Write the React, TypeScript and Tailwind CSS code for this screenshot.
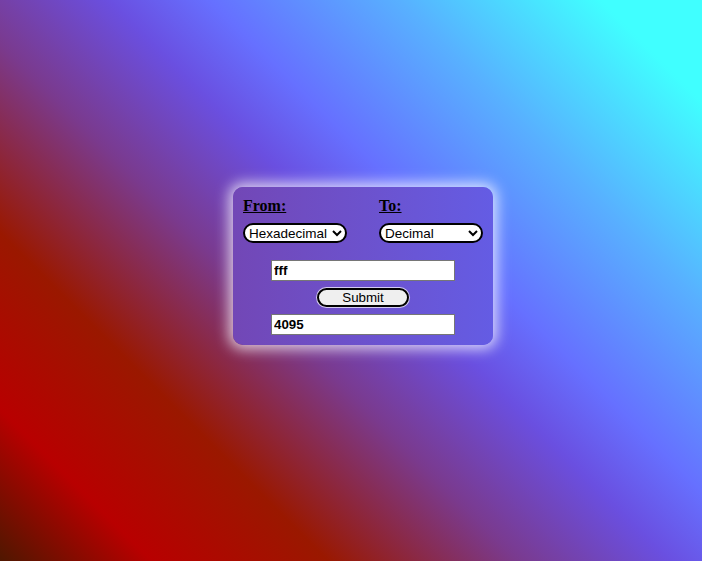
import { useState } from "react";

export default function App() {
  const [from, setFrom] = useState("Hexadecimal");
  const [to, setTo] = useState("Decimal");
  const [value, setValue] = useState("fff");
  const [result, setResult] = useState("4095");

  const bases: Record<string, number> = { Binary: 2, Octal: 8, Decimal: 10, Hexadecimal: 16 };

  const convert = () => {
    const n = parseInt(value, bases[from]);
    setResult(isNaN(n) ? "" : n.toString(bases[to]));
  };

  return (
    <div className="min-h-screen w-full bg-[linear-gradient(45deg,#4f1700_0%,#b80000_12%,#9a1800_26%,#7a3a8e_41%,#6a4fe0_53%,#6670ff_61%,#58b0ff_76%,#40ffff_92%)] pl-[233px] pt-[187px]">
      {/* Card */}
      <div className="w-[260px] rounded-[10px] bg-linear-to-r from-[#7247b6] to-[#645ce4] px-[10px] pt-[10px] pb-[10px] shadow-[0_0_14px_4px_rgba(255,255,255,0.75)]">
        <div className="flex justify-between">
          <div className="w-[104px]">
            <div className="h-[18px] font-['Liberation_Serif',serif] text-[16px] font-bold leading-[18px] underline">From:</div>
            <select
              value={from}
              onChange={(e) => setFrom(e.target.value)}
              className="mt-[8px] h-[20px] w-[104px] rounded-full border-2 border-black bg-white pl-0 font-['Liberation_Sans',Arial,sans-serif] text-[13.5px] text-black"
            >
              {Object.keys(bases).map((b) => (
                <option key={b}>{b}</option>
              ))}
            </select>
          </div>
          <div className="w-[104px]">
            <div className="h-[18px] font-['Liberation_Serif',serif] text-[16px] font-bold leading-[18px] underline">To:</div>
            <select
              value={to}
              onChange={(e) => setTo(e.target.value)}
              className="mt-[8px] h-[20px] w-[104px] rounded-full border-2 border-black bg-white pl-0 font-['Liberation_Sans',Arial,sans-serif] text-[13.5px] text-black"
            >
              {Object.keys(bases).map((b) => (
                <option key={b}>{b}</option>
              ))}
            </select>
          </div>
        </div>

        <div className="mt-[16px] flex flex-col items-center gap-[7px] font-['Liberation_Sans',Arial,sans-serif] text-[13.33px]">
          <input
            value={value}
            onChange={(e) => setValue(e.target.value)}
            className="h-[21px] w-[184px] border border-[#767676] bg-white px-[2px] font-bold text-black outline-none"
          />
          <button
            onClick={convert}
            className="h-[19px] w-[92px] rounded-full border-2 border-black bg-[#efefef] leading-none text-black ring-1 ring-white/70"
          >
            Submit
          </button>
          <input
            value={result}
            readOnly
            className="h-[21px] w-[184px] border border-[#767676] bg-white px-[2px] font-bold text-black outline-none"
          />
        </div>
      </div>
    </div>
  );
}
